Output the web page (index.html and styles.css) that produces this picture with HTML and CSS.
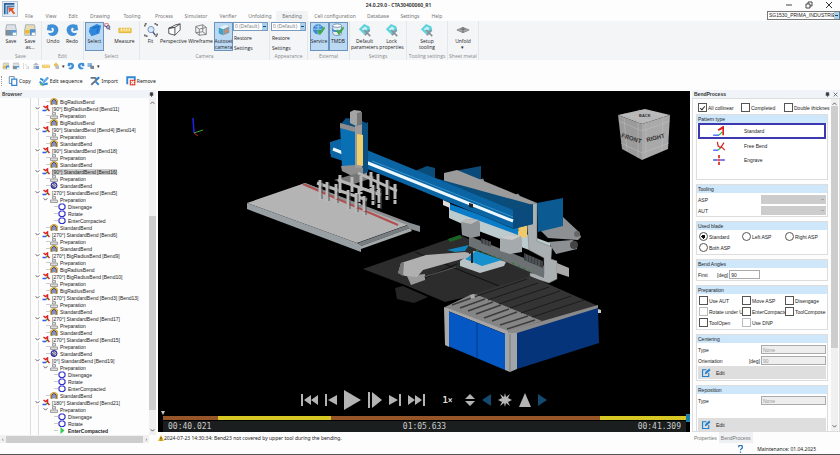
FILE: index.html
```html
<!DOCTYPE html>
<html lang="en">
<head>
<meta charset="utf-8">
<title>24.0.29.0 - CTA30400060_R1</title>
<link rel="stylesheet" href="styles.css">
</head>
<body>
<svg class="defs" aria-hidden="true">
  <symbol id="i-bend" viewBox="0 0 16 14"><path d="M1 11h7" stroke="#35f" stroke-width="3"/><path d="M8 11l4-4" stroke="#2b3" stroke-width="3"/><path d="M3 2l4 3 4-3v6l4 4" stroke="#d22" stroke-width="3" fill="none"/></symbol>
  <symbol id="i-prep" viewBox="0 0 16 14"><path d="M5 1h6v5H5zM1 8h14v5H1z" fill="#ddd" stroke="#888" stroke-width="1.5"/></symbol>
  <symbol id="i-std" viewBox="0 0 16 14"><path d="M1 4l4-3h6l4 3v9H1z" fill="#e9b52c" stroke="#a83"/><path d="M4 13V6l4-3 4 3v7" fill="#eef" stroke="#237" stroke-width="2"/><path d="M8 5v7" stroke="#237" stroke-width="2"/></symbol>
  <symbol id="i-stdb" viewBox="0 0 16 14"><circle cx="8" cy="7" r="6" fill="#668" stroke="#22a" stroke-width="2"/><path d="M4 4l8 6M9 3l3 4" stroke="#dde" stroke-width="2"/></symbol>
  <symbol id="i-op" viewBox="0 0 16 14"><path d="M5 2h6l3 3v5l-3 3H5l-3-3V5z" fill="#fff" stroke="#33c" stroke-width="2.4"/></symbol>
  <symbol id="i-go" viewBox="0 0 16 14"><path d="M5 0l8 7-8 7z" fill="#3c5"/></symbol>
  <symbol id="i-save" viewBox="0 0 16 16"><path d="M3 2h10l1 6v6H2V8z" fill="#dde1e5" stroke="#a4abb2"/><path d="M2 8h12v6H2z" fill="#7f8c99"/><path d="M8 8h6v6H8z" fill="#5b9bd8"/><path d="M10 11h4v3h-4z" fill="#fff"/></symbol>
  <symbol id="i-saveas" viewBox="0 0 16 16"><path d="M3 2h10l1 6v6H2V8z" fill="#e8dcb4" stroke="#a4abb2"/><path d="M2 8h12v4H2z" fill="#e9b945"/><path d="M8 7h6v7H8z" fill="#4e91d4"/><path d="M10 11h4v3h-4z" fill="#fff"/></symbol>
  <symbol id="i-undo" viewBox="0 0 16 16"><path d="M4 2c6-2 11 2 10 7s-6 7-10 5l-2-3c4 1 7 0 7-3S7 5 6 6l1 3-6-1 1-6z" fill="#3f8fd6"/></symbol>
  <symbol id="i-redo" viewBox="0 0 16 16"><path d="M12 2C6 0 1 4 2 9s6 7 10 5l2-3c-4 1-7 0-7-3s2-3 3-2L9 9l6-1-1-6z" fill="#3f8fd6"/></symbol>
  <symbol id="i-select" viewBox="0 0 16 16"><path d="M2 5l8-4 5 2-2 9-9 3-3-5z" fill="#2f86dd"/><path d="M5 6l7-2-2 7" stroke="#1565b8" fill="none"/></symbol>
  <symbol id="i-pick" viewBox="0 0 10 10"><path d="M1 1h5v4H1z" fill="#fff" stroke="#c44"/><circle cx="6" cy="6" r="2.5" fill="#aac" stroke="#446"/><path d="M1 4l3 1" stroke="#23a"/><path d="M7 8l2 2" stroke="#334"/></symbol>
  <symbol id="i-ruler" viewBox="0 0 16 16"><path d="M1 6h14v5H1z" fill="#f3cd55" stroke="#e0b030"/><path d="M4 6v3M7 6v3M10 6v3M13 6v3" stroke="#fff"/></symbol>
  <symbol id="i-fit" viewBox="0 0 16 16"><path d="M1 4V1h3M12 1h3v3M15 12v3h-3M4 15H1v-3" fill="none" stroke="#333" stroke-width="1.4" stroke-dasharray="2 1"/><circle cx="8" cy="7.500" r="3.500" fill="#d8ecf8" stroke="#68b"/><path d="M10 10l3 4" stroke="#557" stroke-width="1.500"/></symbol>
  <symbol id="i-persp" viewBox="0 0 16 16"><path d="M2 6l7-1v9l-7-2zM2 6l8-4 5-1-6 4zM15 1v7l-6 6" fill="#fff" stroke="#444"/></symbol>
  <symbol id="i-wire" viewBox="0 0 16 16"><path d="M2 4l8-2 4 3v8l-8 1-4-3zM2 4l4 3 8-2M6 7v7M10 2v8l4 3M10 10l-8 1" fill="none" stroke="#777"/></symbol>
  <symbol id="i-autoset" viewBox="0 0 16 16"><path d="M2 5l8-3 4 2-7 3z" fill="#e4f3f8"/><path d="M2 5l5 2v7l-5-2z" fill="#3da4c6"/><path d="M7 7l7-3v7l-7 3z" fill="#8d9aa3"/><path d="M9 9l3-1v2l-3 1z" fill="#e84"/></symbol>
  <symbol id="i-service" viewBox="0 0 16 16"><circle cx="7" cy="7" r="6" fill="#3c88cf"/><path d="M1 7h12M3 3c3 2 6 2 8 0M7 1v12" stroke="#a8d3f2" fill="none"/><path d="M6 9l3 5 6-8-1-2-5 6-2-3z" fill="#3fae3f"/></symbol>
  <symbol id="i-tmdb" viewBox="0 0 16 16"><path d="M2 3v9c0 3 10 3 10 0V3" fill="#e6edf3" stroke="#6a8cab"/><ellipse cx="7" cy="3" rx="5" ry="2" fill="#fff" stroke="#6a8cab"/><path d="M2 7c0 3 10 3 10 0" fill="none" stroke="#3d86cc" stroke-width="2"/><path d="M6 9l3 5 6-8-1-2-5 6-2-3z" fill="#3fae3f"/></symbol>
  <symbol id="i-param" viewBox="0 0 16 16"><path d="M1 7l6-6 6 3 1 5-6 5z" fill="#5fd0de"/><path d="M4 7l4-3 3 2-3 3z" fill="#c6f3f6"/><path d="M7 8l7 7M13 8l-5 6" stroke="#8a9196" stroke-width="2"/></symbol>
  <symbol id="i-unfold" viewBox="0 0 16 16"><path d="M1 8l7-3 7 3-7 3z" fill="#aaa" stroke="#888"/><path d="M5 7h6M8 5v6" stroke="#666"/></symbol>
  <symbol id="i-copy" viewBox="0 0 16 16"><path d="M2 1h8v11H2z" fill="#fff" stroke="#68a" stroke-width="1.500"/><path d="M6 5h8v10H6z" fill="#fff" stroke="#2e86d8" stroke-width="2"/></symbol>
  <symbol id="i-edit" viewBox="0 0 16 16"><path d="M8 3H1v12h11V9" fill="none" stroke="#1f7fd0" stroke-width="2"/><path d="M5 11l1-4 7-6 2 3-7 6z" fill="#1f7fd0"/></symbol>
  <symbol id="i-seq" viewBox="0 0 16 16"><path d="M2 4l5 3M1 9l5 5 8-2" stroke="#2e86d8" stroke-width="3" fill="none"/><path d="M5 10l8-9 3 2-8 9z" fill="#58a8e8"/><circle cx="4" cy="13" r="2" fill="#5b5"/></symbol>
  <symbol id="i-import" viewBox="0 0 16 16"><path d="M1 3h7l3 4M2 14l12-11" stroke="#687480" stroke-width="3" fill="none"/><path d="M9 9l5 5M10 5l5-3" stroke="#2e86d8" stroke-width="3"/></symbol>
  <symbol id="i-remove" viewBox="0 0 16 16"><path d="M2 13V2h12v5" fill="#fff" stroke="#2e86d8" stroke-width="3"/><path d="M6 6h9v9H6z" fill="#e43b26"/><path d="M8 8l5 5M13 8l-5 5" stroke="#fff" stroke-width="2"/></symbol>
  <symbol id="i-pin" viewBox="0 0 8 8"><path d="M2 1h4v4H2zM1 5h6M4 5v3" fill="#333" stroke="#333"/></symbol>
  <symbol id="i-down" viewBox="0 0 8 8"><path d="M1 2l3 3 3-3" fill="none" stroke="#555" stroke-width="1.500"/></symbol>
  <symbol id="i-up" viewBox="0 0 8 8"><path d="M1 6l3-3 3 3" fill="none" stroke="#555" stroke-width="1.500"/></symbol>
  <symbol id="i-cross" viewBox="0 0 8 8"><path d="M1 1l6 6M7 1L1 7" stroke="#333"/></symbol>
</svg>

<header class="titlebar">
  <svg class="logo" viewBox="0 0 16 16"><path d="M2 14V2h11" fill="none" stroke="#2b5e96" stroke-width="2"/><path d="M5 14V5h8" fill="none" stroke="#4b86bd" stroke-width="2"/><path d="M6 6l7 1-2 2 3 4-2 1-3-4-2 2z" fill="#e2542a"/></svg>
  <div class="head">
    <div class="title">24.0.29.0 - CTA30400060_R1</div>
    <nav class="tabs">
      <a href="#">File</a><a href="#">View</a><a href="#">Edit</a><a href="#" class="t-wide">Drawing</a><a href="#" class="t-wide">Tooling</a><a href="#" class="t-wide">Process</a><a href="#" class="t-wide">Simulator</a><a href="#" class="t-wide">Verifier</a><a href="#" class="t-wide">Unfolding</a><a href="#" class="t-wide active">Bending</a><a href="#" class="t-long">Cell configuration</a><a href="#" class="t-wide">Database</a><a href="#" class="t-wide">Settings</a><a href="#">Help</a>
    </nav>
  </div>
  <div class="winside">
    <div class="winbtns">
      <button aria-label="Minimize"><svg viewBox="0 0 8 8"><path d="M1 4h6" stroke="#444"/></svg></button>
      <button aria-label="Restore"><svg viewBox="0 0 8 8"><path d="M1 3h4v4H1zM3 3V1h4v4H5" fill="none" stroke="#444"/></svg></button>
      <button aria-label="Close"><svg><use href="#i-cross"/></svg></button>
    </div>
    <span class="drop machine"><select aria-label="Machine"><option>SG1530_PRIMA_INDUSTRIE</option></select></span>
  </div>
</header>

<section class="ribbon">
  <div class="group"><div class="items"><button class="tool"><svg><use href="#i-save"/></svg>Save</button><button class="tool"><svg><use href="#i-saveas"/></svg>Save<br>as...</button></div><h2>Save</h2></div>
  <div class="group"><div class="items"><button class="tool"><svg><use href="#i-undo"/></svg>Undo</button><button class="tool"><svg><use href="#i-redo"/></svg>Redo</button></div><h2>Edit</h2></div>
  <div class="group"><div class="items"><button class="tool on"><svg><use href="#i-select"/></svg>Select</button><button class="mini" aria-label="Pick"><svg><use href="#i-pick"/></svg></button><button class="tool mid"><svg><use href="#i-ruler"/></svg>Measure</button></div><h2>Select</h2></div>
  <div class="group"><div class="items"><button class="tool"><svg><use href="#i-fit"/></svg>Fit</button><button class="tool mid"><svg><use href="#i-persp"/></svg>Perspective</button><button class="tool mid"><svg><use href="#i-wire"/></svg>Wireframe</button><button class="tool on"><svg><use href="#i-autoset"/></svg>Autoset<br>camera</button>
    <div class="stack"><span class="drop"><select aria-label="Camera preset"><option>0 (Default)</option></select></span><button>Restore</button><button>Settings</button></div></div><h2>Camera</h2></div>
  <div class="group"><div class="items"><div class="stack"><span class="drop"><select aria-label="Appearance preset"><option>0 (Default)</option></select></span><button>Restore</button><button>Settings</button></div></div><h2>Appearance</h2></div>
  <div class="group"><div class="items"><button class="tool on"><svg><use href="#i-service"/></svg>Service</button><button class="tool on"><svg><use href="#i-tmdb"/></svg>TMDB</button></div><h2>External</h2></div>
  <div class="group"><div class="items"><button class="tool mid"><svg><use href="#i-param"/></svg>Default<br>parameters</button><button class="tool mid"><svg><use href="#i-param"/></svg>Lock<br>properties</button></div><h2>Settings</h2></div>
  <div class="group"><div class="items"><button class="tool mid"><svg><use href="#i-param"/></svg>Setup<br>tooling</button></div><h2>Tooling settings</h2></div>
  <div class="group"><div class="items"><button class="tool mid"><svg><use href="#i-unfold"/></svg>Unfold<br>▾</button></div><h2>Sheet metal</h2></div>
</section>

<div class="quick">
  <svg><use href="#i-saveas"/></svg><svg><use href="#i-save"/></svg><svg viewBox="0 0 16 16"><path d="M3 2v12M6 4l7 9M13 8v5H8" stroke="#bbb" fill="none"/></svg><svg viewBox="0 0 16 16"><path d="M8 1l6 5H2zM3 7h8v7H3z" fill="#b4bcc5"/><path d="M8 8h6v6H8z" fill="#6e9fd0"/></svg><svg><use href="#i-ruler"/></svg><svg viewBox="0 0 16 16"><path d="M8 1l5 5-5 5-5-5z" fill="#e8c24e"/><path d="M7 7h7v7H7z" fill="#b9bfc6"/></svg><span>▾</span><svg><use href="#i-undo"/></svg><svg><use href="#i-redo"/></svg><svg viewBox="0 0 16 16"><path d="M1 2h9v8H1z" fill="#8bb7de"/><path d="M6 6l8 2v6H7z" fill="#7b8894"/></svg><span>▾</span>
</div>
<div class="actions">
  <i class="grip"></i>
  <button><svg><use href="#i-copy"/></svg>Copy</button>
  <button><svg><use href="#i-seq"/></svg>Edit sequence</button>
  <button><svg><use href="#i-import"/></svg>Import</button>
  <button><svg><use href="#i-remove"/></svg>Remove</button>
</div>

<main class="work">
  <aside class="browser">
    <div class="panel-head"><b>Browser</b><svg><use href="#i-pin"/></svg></div>
    <div class="tree-wrap">
      <ul class="tree">
        <li class="l1"><svg><use href="#i-std"/></svg>BigRadiusBend</li>
        <li class="l0"><svg class="chev"><use href="#i-down"/></svg><svg><use href="#i-bend"/></svg>[90°] BigRadiusBend [Bend11]</li>
        <li class="l1"><svg><use href="#i-prep"/></svg>Preparation</li>
        <li class="l1"><svg><use href="#i-std"/></svg>BigRadiusBend</li>
        <li class="l0"><svg class="chev"><use href="#i-down"/></svg><svg><use href="#i-bend"/></svg>[90°] StandardBend [Bend4] [Bend14]</li>
        <li class="l1"><svg><use href="#i-prep"/></svg>Preparation</li>
        <li class="l1"><svg><use href="#i-std"/></svg>StandardBend</li>
        <li class="l0"><svg class="chev"><use href="#i-down"/></svg><svg><use href="#i-bend"/></svg>[90°] StandardBend [Bend18]</li>
        <li class="l1"><svg><use href="#i-prep"/></svg>Preparation</li>
        <li class="l1"><svg><use href="#i-std"/></svg>StandardBend</li>
        <li class="l0"><svg class="chev"><use href="#i-down"/></svg><svg><use href="#i-bend"/></svg><span class="sel">[90°] StandardBend [Bend16]</span></li>
        <li class="l1"><svg><use href="#i-prep"/></svg>Preparation</li>
        <li class="l1"><svg><use href="#i-stdb"/></svg>StandardBend</li>
        <li class="l0"><svg class="chev"><use href="#i-down"/></svg><svg><use href="#i-bend"/></svg>[270°] StandardBend [Bend5]</li>
        <li class="l1 open"><svg class="chev"><use href="#i-down"/></svg><svg><use href="#i-prep"/></svg>Preparation</li>
        <li class="l2"><svg><use href="#i-op"/></svg>Disengage</li>
        <li class="l2"><svg><use href="#i-op"/></svg>Rotate</li>
        <li class="l2"><svg><use href="#i-op"/></svg>EnterCompacted</li>
        <li class="l1"><svg><use href="#i-std"/></svg>StandardBend</li>
        <li class="l0"><svg class="chev"><use href="#i-down"/></svg><svg><use href="#i-bend"/></svg>[270°] StandardBend [Bend6]</li>
        <li class="l1"><svg><use href="#i-prep"/></svg>Preparation</li>
        <li class="l1"><svg><use href="#i-std"/></svg>StandardBend</li>
        <li class="l0"><svg class="chev"><use href="#i-down"/></svg><svg><use href="#i-bend"/></svg>[270°] BigRadiusBend [Bend9]</li>
        <li class="l1"><svg><use href="#i-prep"/></svg>Preparation</li>
        <li class="l1"><svg><use href="#i-std"/></svg>BigRadiusBend</li>
        <li class="l0"><svg class="chev"><use href="#i-down"/></svg><svg><use href="#i-bend"/></svg>[270°] BigRadiusBend [Bend10]</li>
        <li class="l1"><svg><use href="#i-prep"/></svg>Preparation</li>
        <li class="l1"><svg><use href="#i-std"/></svg>BigRadiusBend</li>
        <li class="l0"><svg class="chev"><use href="#i-down"/></svg><svg><use href="#i-bend"/></svg>[270°] StandardBend [Bend3] [Bend13]</li>
        <li class="l1"><svg><use href="#i-prep"/></svg>Preparation</li>
        <li class="l1"><svg><use href="#i-std"/></svg>StandardBend</li>
        <li class="l0"><svg class="chev"><use href="#i-down"/></svg><svg><use href="#i-bend"/></svg>[270°] StandardBend [Bend17]</li>
        <li class="l1"><svg><use href="#i-prep"/></svg>Preparation</li>
        <li class="l1"><svg><use href="#i-std"/></svg>StandardBend</li>
        <li class="l0"><svg class="chev"><use href="#i-down"/></svg><svg><use href="#i-bend"/></svg>[270°] StandardBend [Bend15]</li>
        <li class="l1"><svg><use href="#i-prep"/></svg>Preparation</li>
        <li class="l1"><svg><use href="#i-stdb"/></svg>StandardBend</li>
        <li class="l0"><svg class="chev"><use href="#i-down"/></svg><svg><use href="#i-bend"/></svg>[0°] StandardBend [Bend19]</li>
        <li class="l1 open"><svg class="chev"><use href="#i-down"/></svg><svg><use href="#i-prep"/></svg>Preparation</li>
        <li class="l2"><svg><use href="#i-op"/></svg>Disengage</li>
        <li class="l2"><svg><use href="#i-op"/></svg>Rotate</li>
        <li class="l2"><svg><use href="#i-op"/></svg>EnterCompacted</li>
        <li class="l1"><svg><use href="#i-std"/></svg>StandardBend</li>
        <li class="l0"><svg class="chev"><use href="#i-down"/></svg><svg><use href="#i-bend"/></svg>[180°] StandardBend [Bend21]</li>
        <li class="l1 open"><svg class="chev"><use href="#i-down"/></svg><svg><use href="#i-prep"/></svg>Preparation</li>
        <li class="l2"><svg><use href="#i-op"/></svg>Disengage</li>
        <li class="l2"><svg><use href="#i-op"/></svg>Rotate</li>
        <li class="l2"><svg><use href="#i-go"/></svg><b>EnterCompacted</b></li>
      </ul>
      <div class="vbar"><svg><use href="#i-up"/></svg><i class="space"></i><i class="thumb"></i><i class="rest"></i><svg><use href="#i-down"/></svg></div>
    </div>
    <div class="hbar"><span>‹</span><i></i><span>›</span></div>
  </aside>

  <section class="center">
    <div class="viewport">
      <svg class="scene" viewBox="158 91 532 341" role="img" aria-label="Machine view">
        <!-- axes -->
        <path d="M193 118l1 15" stroke="#22e" stroke-width="1.500"/><path d="M194 133l9-3" stroke="#3a3"/><path d="M194 133l4 3" stroke="#c22"/>
        <!-- loading table -->
        <path d="M247 203l58-20 105 41-53 19z" fill="#b4b4b4"/>
        <path d="M247 203l110 40 4 2v7l-114-43z" fill="#99a0a3"/>
        <path d="M358 243l50-18 2 3-49 18z" fill="#777d80"/><path d="M361 246l49-18 2 3-51 18z" fill="#a3a9ab"/>
        <path d="M305 183l105 40 10 3v6l-10-3-3-4-102-39z" fill="#8c9092"/>
        <path d="M303 184l95 41" stroke="#b05050" stroke-width="2"/>
        <!-- floor plates -->
        <path d="M363 269l97-34 88 40-30 10-73 17-40-17z" fill="#2c2c2c"/>
        <path d="M415 252l84 34M411 284l46-20" stroke="#111"/>
        <path d="M448 239l12-4 2 3-12 4z" fill="#1c6424"/>
        <!-- rear frame -->
        <path d="M455 171l26-5v14l-4 3z" fill="#0b4a78"/>
        <path d="M563 217l16 15 2 5-3 3-30-2-8-8z" fill="#8c9092"/><circle cx="577" cy="234" r="3" fill="#666"/>
        <path d="M548 242l24-2 5 2v7l-21 5z" fill="#8c9092"/><circle cx="574" cy="245" r="4" fill="#444"/>
        <path d="M477 181l6-2 1 4M511 197l7-3 4 6" fill="#777" stroke="#888"/>
        <path d="M444 173l13-3 80 33v9l-20-6-73-25z" fill="#9b9b9b"/><path d="M506 201l9 3v4l-9-3z" fill="#444"/>
        <path d="M449 205l101 38v15l-74-28-27-12z" fill="#bccbce"/>
        <path d="M526 206l11-3v38l15 6-1 12 6 2v18l-8 4-19-6v-4l14 2v-17l-15-8z" fill="#aab0b2" stroke="#777" stroke-width=".5"/>
        <path d="M557 263l12 5v9l-12-4z" fill="#a9a9a9"/>
        <path d="M537 203l26-5v28l-25 6z" fill="#0b5a91"/>
        <path d="M443 200l7 3v5l-7-3z" fill="#ddd"/>
        <path d="M450 204l68 24v7l-68-25z" fill="#0b7cc8"/>
        <path d="M518 226l9-3v14l-8 1z" fill="#f0ca6a"/>
        <!-- press bed -->
        <path d="M469 236l75 30v12l-75-32z" fill="#6c7173"/>
        <path d="M481 238l10 4v5l-10-4zM524 253l19 8v7l-19-8z" fill="#3b3f42"/>
        <path d="M484 239v6M487 240v6M490 241v6M527 255v6M530 256v6M533 257v6M536 259v6M539 260v6" stroke="#777" stroke-width=".7"/>
        <path d="M461 222l6-3 12 1 1 4v12l-9 2-9-3z" fill="#8e9396"/><path d="M461 222l6-3 12 1-8 4z" fill="#bbb"/>
        <path d="M500 238l8-3 13 1 1 4v12l-12 2-10-3z" fill="#a5aaad"/><path d="M500 238l8-3 13 1-9 4z" fill="#ccc"/>
        <!-- tray -->
        <path d="M447 250l22-5-4 6-10 1z" fill="#0f84c0"/>
        <path d="M460 261l14-10 32 11-2 4-24 7-20-7z" fill="#b9c2c5"/>
        <path d="M465 259l11-8 26 9-20 6z" fill="#1790ce"/><path d="M472 252v11" stroke="#222" stroke-width="2"/>
        <path d="M476 250l26 9M512 263l18 8" stroke="#2a7a35" stroke-dasharray="3 3"/>
        <!-- unload arm -->
        <path d="M395 288l8-2 25 11-14 6-17-4z" fill="#252525"/>
        <path d="M407 276l18-2v6l-14 5z" fill="#9a9a9a"/><path d="M398 273l3-10 25-8 39-3 4 1v4l-46 13-6 7-12-1z" fill="#b0b0b0"/><path d="M398 273l3-10 3 0-1 13z" fill="#777"/><path d="M424 277l32-10" stroke="#555"/>
        <!-- gantry -->
        <path d="M372 153l43 18 12-5 8 2v10l98 27v19l-20 5-143-60-40-15V142z" fill="#0a4c7a"/>
        <path d="M330 142l10-3 173 71v18l-143-58-39-13z" fill="#0b65a4"/>
        <path d="M513 210l20-6v20l-20 5z" fill="#0a4a7c"/>
        <path d="M333 149l180 72" stroke="#eef8ff" stroke-width="3"/><path d="M372 161l141 56" stroke="#3591cc"/>
        <path d="M469 203l4 1v4l-4-1z" fill="#222"/>
        <path d="M340 125l15 4v38l-13 1z" fill="#0a70b4"/><path d="M340 125l6-7 14 2 8 4v48h-8l-5-40z" fill="#0a4f80"/>
        <path d="M340 123l15 4v5l-15-4zM341 166l14-1 12 4v6l-13 2-12-6z" fill="#8e8e8e"/>
        <path d="M355 126l7-2v44h-7z" fill="#9a9a9a"/><path d="M357 134l6 1v31l-6-1z" fill="#efcf6c"/>
        <path d="M363 125l5-3v50l-5 2z" fill="#0a4f80"/>
        <path d="M350 112l4-2 7 1 1 12-6 3-6-3z" fill="#a4a4a4"/><path d="M357 113l5-1v11l-5 3z" fill="#777"/>
        <!-- gripper bars -->
        <path d="M334 180l24-7 17 4-24 8z" fill="#777"/>
        <path d="M317 183l50 17M338 180l43 15M358 173l39 18" stroke="#b8b8b8" stroke-width="3"/>
        <g stroke="#b9b9b9" stroke-width="3" stroke-dasharray="15 1 4"><path d="M320 180v20M327 182v20M336 184v19M348 190v20M356 193v20M364 196v20M340 175v18M352 177v16M361 176v18M373 185v20M379 188v22M371 172v18M378 174v18M387 180v21M395 184v21M359 187v18"/></g>
        <g stroke="#555"><path d="M322 181v18M329 183v18M338 185v18M350 191v18M358 194v18M366 197v18M375 186v18M381 189v20M389 181v19"/></g>
        <!-- stacking table -->
        <path d="M445 307l25-12 60-19 68 30-90 26z" fill="#343434"/>
        <path d="M445 307l25-12 5-1 67 27-34 11z" fill="#858585"/>
        <path d="M452 305l25-9M460 308l25-9M468 311l25-9M476 314l25-9M484 318l25-9M492 321l25-9M500 325l28-9M507 329l28-9" stroke="#3c3c3c" stroke-width="1.500"/>
        <path d="M477 296l50-17M488 300l50-17M499 304l50-17M510 308l50-17M521 313l50-17M532 317l52-17" stroke="#1c1c1c"/>
        <path d="M470 295l4-1 1 4-4 1z" fill="#aaa"/>
        <path d="M445 307l3 1 60 23v4l-60-24z" fill="#a6a6a6"/>
        <path d="M448 311l57 23v36l-57-24z" fill="#0558c4"/><path d="M477 323v35" stroke="#03398a"/>
        <path d="M444 307l5 2v38l-4-2z" fill="#aaa"/>
        <path d="M505 332h12v37l-7 3-5-2z" fill="#a2a5a7"/><path d="M510 334v37" stroke="#777"/>
        <path d="M517 332l81-25 1 36-82 26z" fill="#05347a"/><path d="M508 331l90-26v3l-81 25h-9z" fill="#8a8a8a"/><path d="M598 309l3 1v3h-3z" fill="#ccc"/>
        <!-- view cube -->
        <path d="M618 115l27-6 25 6-28 9z" fill="#b8b8b8"/><path d="M618 115l24 9v36l-20-11z" fill="#9b9b9b"/><path d="M642 124l28-9-2 34-26 11z" fill="#a9a9a9"/>
        <path d="M619 121l23 10 28-10M621 143l21 10 27-10M624 118l3 33M663 117l-1 34M646 123v35M638 122v36M624 114l27 7M638 110l27 6" fill="none" stroke="#c8c8c8" stroke-width=".4"/>
        <text class="cube" x="621" y="137" transform="rotate(18 621 137)">FRONT</text><text class="cube" x="647" y="142" transform="rotate(-14 647 142)">RIGHT</text><text class="cube top" x="639" y="117">BACK</text>
      </svg>
      <div class="playback">
        <div class="controls">
          <button class="w17" aria-label="First"><svg viewBox="0 0 17 14"><path d="M0 1h2v12H0zM10 2v10L3 7zM17 2v10l-7-5z"/></svg></button>
          <button class="w12" aria-label="Previous"><svg viewBox="0 0 12 14"><path d="M0 1h2v12H0zM12 2v10L3 7z"/></svg></button>
          <button class="w17" aria-label="Play"><svg viewBox="0 0 17 20"><path d="M0 0l17 10L0 20z"/></svg></button>
          <button class="w14" aria-label="Step"><svg viewBox="0 0 14 16"><path d="M0 0h2v16H0zM4 0l10 8-10 8z"/></svg></button>
          <button class="w12" aria-label="Next"><svg viewBox="0 0 12 14"><path d="M10 1h2v12h-2zM0 2v10l9-5z"/></svg></button>
          <button class="w17" aria-label="Last"><svg viewBox="0 0 17 14"><path d="M15 1h2v12h-2zM0 2v10l7-5zM7 2v10l7-5z"/></svg></button>
          <span class="speed">1<small>×</small></span>
          <button class="w10" aria-label="Speed"><svg viewBox="0 0 10 12"><path d="M0 5l5-5 5 5zM0 7h10l-5 5z"/></svg></button>
          <button class="w9 blue" aria-label="Previous collision"><svg viewBox="0 0 9 12"><path d="M9 0v12L0 6z"/></svg></button>
          <button class="w14" aria-label="Collision"><svg viewBox="0 0 14 14"><path d="M7 0l1 4 4-3-2 4 4 2-4 2 2 4-4-3-1 4-1-4-4 3 2-4-4-2 4-2-2-4 4 3z"/></svg></button>
          <button class="w12" aria-label="Warning"><svg viewBox="0 0 12 14"><path d="M6 0l6 14H0z"/></svg></button>
          <button class="w9 blue" aria-label="Next collision"><svg viewBox="0 0 9 12"><path d="M0 0v12l9-6z"/></svg></button>
        </div>
        <svg class="marker" viewBox="0 0 4 4"><path d="M0 0h4L2 4z" fill="#ccc"/></svg>
        <div class="track"><i class="brown"></i><i class="yellow"></i><i class="brown long"></i><i class="yellow end"></i><i class="knob"></i></div>
        <div class="times"><span>00:40.021</span><span>01:05.633</span><span>00:41.309</span></div>
      </div>
    </div>
    <div class="message"><svg viewBox="0 0 12 12"><path d="M6 0l6 12H0z" fill="#e2b51c"/><path d="M6 4v4M6 9v2" stroke="#222" stroke-width="1.500"/></svg>2024-07-23 14:30:34: Bend23 not covered by upper tool during the bending.</div>
  </section>

  <aside class="props">
    <div class="panel-head"><b>BendProcess</b><svg><use href="#i-pin"/></svg><svg><use href="#i-cross"/></svg></div>
    <div class="prop-wrap">
      <form class="form">
        <div class="cols top-row"><label><input type="checkbox" checked>All collinear</label><label><input type="checkbox">Completed</label><label><input type="checkbox">Double thicknes</label></div>
        <fieldset class="pattern"><h3>Pattern type</h3>
          <button type="button" class="pat chosen"><svg viewBox="0 0 16 12"><path d="M1 11h7" stroke="#35f" stroke-width="1.500"/><path d="M8 11l4-4" stroke="#2b3" stroke-width="1.500"/><path d="M13 7V1L7 5l6-3v9" stroke="#d22" stroke-width="2" fill="none"/></svg>Standard</button>
          <button type="button" class="pat"><svg viewBox="0 0 16 12"><path d="M1 11h6" stroke="#35f" stroke-width="1.500"/><path d="M7 11l4-4" stroke="#2b3" stroke-width="1.500"/><path d="M6 1l1 5 3 2 4-6M11 7l4 4" stroke="#d22" stroke-width="1.500" fill="none"/></svg>Free Bend</button>
          <button type="button" class="pat"><svg viewBox="0 0 16 12"><path d="M1 6h5M10 6h5" stroke="#35f" stroke-width="2"/><path d="M8 0v4M8 8v4M6 6h4" stroke="#d22" stroke-width="2"/></svg>Engrave</button>
        </fieldset>
        <fieldset><h3>Tooling</h3>
          <div class="row"><label for="asp">ASP</label><span class="drop grey"><select id="asp" disabled></select></span></div>
          <div class="row"><label for="aut">AUT</label><span class="drop grey"><select id="aut" disabled></select></span></div>
        </fieldset>
        <fieldset><h3>Used blade</h3>
          <div class="cols"><label><input type="radio" name="blade" checked>Standard</label><label><input type="radio" name="blade">Left ASP</label><label><input type="radio" name="blade">Right ASP</label><label><input type="radio" name="blade">Both ASP</label></div>
        </fieldset>
        <fieldset><h3>Bend Angles</h3>
          <div class="row first"><label for="first">First</label><span>[deg]</span><input id="first" value="90"></div>
        </fieldset>
        <fieldset><h3>Preparation</h3>
          <div class="cols"><label><input type="checkbox">Use AUT</label><label><input type="checkbox">Move ASP</label><label><input type="checkbox">Disengage</label><label><input type="checkbox" class="dim">Rotate under U</label><label><input type="checkbox">EnterCompacte</label><label><input type="checkbox">ToolCompose</label><label><input type="checkbox">ToolOpen</label><label><input type="checkbox" class="dim">Use DNP</label></div>
        </fieldset>
        <fieldset><h3>Centering</h3>
          <div class="row"><label for="ctype">Type</label><input id="ctype" value="None" disabled></div>
          <div class="row"><label for="orient">Orientation</label><span>[deg]</span><input id="orient" value="90" disabled></div>
          <button type="button" class="edit"><svg><use href="#i-edit"/></svg>Edit</button>
        </fieldset>
        <fieldset class="repos"><h3>Reposition</h3>
          <div class="row"><label for="rtype">Type</label><input id="rtype" value="None" disabled></div>
          <button type="button" class="edit"><svg><use href="#i-edit"/></svg>Edit</button>
        </fieldset>
      </form>
      <div class="vbar right"><svg><use href="#i-up"/></svg><i class="thumb"></i><i class="rest"></i><svg><use href="#i-down"/></svg></div>
    </div>
    <div class="dock-tabs"><button>Properties</button><button class="cur">BendProcess</button></div>
  </aside>
</main>

<footer class="status"><svg viewBox="0 0 8 12"><path d="M1 3c0-4 6-4 6 0 0 3-3 2-3 5" fill="none" stroke="#2b6fb5" stroke-width="2"/><path d="M3 10h2v2H3z" fill="#2b6fb5"/></svg><span>Maintenance: 01.04.2025</span></footer>
</body>
</html>
```
FILE: styles.css
```css
* { box-sizing: border-box; }
body {
  margin: 0;
  height: 100vh;
  display: flex;
  flex-direction: column;
  overflow: hidden;
  background: #fdfdfd;
  color: #222;
  font: 5px/6px "Noto Sans", "Open Sans", sans-serif;
}
button, input, select { font: inherit; color: inherit; margin: 0; padding: 0; border: 0; background: none; border-radius: 0; }
svg { flex: none; display: block; }
.defs { position: absolute; width: 0; height: 0; }
h2, h3 { margin: 0; font: inherit; }

/* title and tabs */
.titlebar { display: flex; height: 21px; flex: none; }
.logo { width: 16px; height: 16px; margin: 1px 0 0 2px; background: #e6eef6; border: 1px solid #b5c6d6; }
.head { flex: 1; display: flex; flex-direction: column; justify-content: space-between; }
.title { padding: 2px 0 0 12px; text-align: center; font-weight: 600; }
.tabs { display: flex; }
.tabs a { width: 22px; padding: 2px 0; text-align: center; color: #777; text-decoration: none; white-space: nowrap; }
.tabs .t-wide { width: 32px; }
.tabs .t-long { width: 54px; }
.tabs .active { background: #f1f3f5; }
.winside { width: 73px; display: flex; flex-direction: column; justify-content: space-between; padding: 1px 0; }
.winbtns { display: flex; justify-content: flex-end; gap: 12px; padding: 0 7px 0 0; }
.winbtns svg { width: 8px; height: 8px; }
.drop { position: relative; display: block; background: #fff; border: 1px solid #777; }
.drop select { appearance: none; display: block; width: 100%; height: 7px; padding: 0 1px; line-height: 7px; }
.drop::after { content: ""; position: absolute; right: 0; top: 0; bottom: 0; width: 5px; background: linear-gradient(#246, #246) center / 3px 1px no-repeat #a9d0ec; }
.machine { font-family: "Liberation Sans", sans-serif; }
.drop.grey { background: #ccc; border-color: #ccc; }
.drop.grey::after { background: linear-gradient(#aaa, #aaa) center / 3px 1px no-repeat; }

/* ribbon */
.ribbon { flex: none; display: grid; grid-template-columns: 42px 42px 56px 130px 38px 42px 57px 41px 31px; height: 39px; background: #f3f5f7; font-family: "Open Sans", "Noto Sans", sans-serif; }
.group { display: flex; flex-direction: column; justify-content: space-between; padding: 1px 0; border-right: 1px solid #e4e7ea; }
.group h2 { color: #888; white-space: nowrap; display: flex; justify-content: center; }
.items { display: flex; justify-content: center; }
.tool { width: 19px; height: 29px; flex: none; display: flex; flex-direction: column; align-items: center; padding-top: 1px; white-space: nowrap; line-height: 6px; }
.tool svg { width: 14px; height: 14px; margin-bottom: 1px; }
.tool.mid { width: 27px; }
.tool.on { background: #bcd9f3; border: 1px solid #6b93bd; padding-top: 0; }
.mini { align-self: flex-start; padding-top: 1px; }
.mini svg { width: 7px; height: 7px; }
.stack { display: flex; flex-direction: column; width: 35px; gap: 3px; }
.stack button { text-align: left; padding: 0 1px; height: 7px; }
.stack .drop { color: #777; border-color: #7a9cc0; }

/* small toolbars */
.quick { flex: none; display: flex; align-items: center; gap: 2px; height: 12px; padding-left: 2px; }
.quick svg { width: 8px; height: 8px; }
.quick span { width: 3px; }
.actions { flex: none; display: flex; align-items: center; gap: 8px; height: 18px; padding-left: 1px; }
.grip { width: 1px; height: 10px; border-left: 1px dotted #999; margin-right: -2px; }
.actions button { display: flex; align-items: center; gap: 1px; white-space: nowrap; }
.actions svg { width: 10px; height: 10px; }

/* work area */
.work { flex: 1; min-height: 0; display: flex; gap: 2px; }
.browser { width: 156px; flex: none; display: flex; flex-direction: column; }
.panel-head { flex: none; display: flex; align-items: center; gap: 3px; height: 8px; padding: 0 2px; background: #f0f3f7; color: #333; }
.panel-head b { flex: 1; font-weight: 600; }
.panel-head svg { width: 5px; height: 5px; }
.tree-wrap { flex: 1; min-height: 0; display: flex; }
.tree { flex: 1; margin: 0; padding: 0; list-style: none; overflow: hidden; font-family: "Liberation Sans", sans-serif; background: linear-gradient(#ddd, #ddd) 30px 0 / 1px 100% no-repeat, linear-gradient(#ddd, #ddd) 38px 0 / 1px 100% no-repeat; }
.tree li { display: flex; align-items: center; gap: 2px; height: 7px; white-space: nowrap; }
.tree svg { width: 8px; height: 7px; }
.tree .chev { width: 5px; height: 5px; background: #fdfdfd; }
.tree .l0 { padding-left: 35px; }
.tree .l1 { padding-left: 50px; background: linear-gradient(#ccc, #ccc) 46px 50% / 4px 1px no-repeat; }
.tree .l1.open { padding-left: 43px; background: none; }
.tree .l2 { padding-left: 58px; background: linear-gradient(#ccc, #ccc) 54px 50% / 4px 1px no-repeat; }
.tree .sel { background: #ccc; }
.vbar { width: 7px; flex: none; display: flex; flex-direction: column; align-items: center; background: #f0f0f0; padding: 2px 0; }
.vbar svg { width: 5px; height: 5px; }
.vbar .thumb { width: 100%; background: #cdcdcd; flex: 195; }
.vbar .space { flex: 112; }
.vbar .rest { flex: 18; }
.vbar.right .thumb { flex: 243; }
.vbar.right .rest { flex: 76; }
.hbar { flex: none; display: flex; align-items: center; height: 8px; margin-right: 7px; padding: 0 2px; gap: 2px; background: #f0f0f0; }
.hbar i { flex: 1; height: 7px; background: #cdcdcd; }

.center { flex: 1; min-width: 0; display: flex; flex-direction: column; }
.viewport { flex: 1; min-height: 0; position: relative; display: flex; flex-direction: column; justify-content: flex-end; margin-top: 1px; background: #000; }
.scene { position: absolute; inset: 0; width: 100%; height: 100%; }
.cube { font: bold 6px "Liberation Sans", sans-serif; fill: #333; }
.cube.top { font-size: 4px; }
.playback { position: relative; }
.controls { display: flex; align-items: center; justify-content: center; gap: 7px; height: 22px; }
.controls svg { width: 100%; fill: #b4b4b4; }
.w9 { width: 9px; } .w10 { width: 10px; } .w12 { width: 12px; } .w14 { width: 14px; } .w17 { width: 17px; }
.controls .blue svg { fill: #124a70; }
.speed { color: #ddd; font: bold 9px/12px "DejaVu Sans Mono", monospace; margin: 0 5px 0 10px; }
.speed small { font-size: 8px; }
.marker { width: 4px; height: 4px; margin-left: 3px; }
.track { display: flex; align-items: center; height: 6px; padding-left: 5px; }
.track i { height: 4px; }
.brown { flex: 55; background: #97562a; }
.brown.long { flex: 269; }
.yellow { flex: 113; background: #d6c724; }
.yellow.end { flex: 86; }
.track .knob { width: 4px; height: 8px; background: #1b7fae; }
.times { display: flex; justify-content: space-between; margin: 0 4px 0 5px; padding: 0 5px; background: #1b1e1e; color: #ccc; font: 8px/11px "DejaVu Sans Mono", monospace; }
.message { flex: none; display: flex; align-items: center; height: 11px; white-space: nowrap; }
.message svg { width: 6px; height: 6px; }

/* properties */
.props { width: 148px; flex: none; display: flex; flex-direction: column; font-family: "Liberation Sans", sans-serif; }
.prop-wrap { flex: 1; min-height: 0; display: flex; gap: 1px; padding-right: 1px; border: 1px solid #ddd; }
.form { flex: 1; min-width: 0; overflow: hidden; display: flex; flex-direction: column; gap: 4px; padding: 2px 2px 0 3px; }
.form fieldset { flex: none; min-width: 0; margin: 0; padding: 0 1px 1px; border: 1px solid #ddd; background: #fff; }
.form h3 { height: 8px; margin: 0 -1px; padding-left: 1px; line-height: 8px; background: #cfe7fb; }
.cols { flex: none; display: grid; grid-template-columns: repeat(3, 43px); row-gap: 2px; padding: 2px 0 1px 1px; }
.cols label { display: flex; align-items: center; gap: 1px; height: 9px; white-space: nowrap; }
.cols input { appearance: none; flex: none; display: grid; place-items: center; width: 9px; height: 9px; border: 1px solid #555; background: #fff; }
.cols input.dim { border-color: #bbb; }
.cols input[type="radio"] { border-radius: 50%; }
.cols input[type="radio"]:checked { background: radial-gradient(#111 0 2px, #fff 2px); }
.cols input[type="checkbox"]:checked::after { content: ""; width: 2px; height: 4px; border: solid #333; border-width: 0 1px 1px 0; transform: rotate(40deg); }
.top-row { padding: 2px 0 0 2px; margin-bottom: -2px; }
.pattern { min-height: 66px; }
.pat { display: flex; align-items: center; width: 100%; height: 14px; gap: 18px; padding-left: 14px; }
.pat svg { width: 14px; height: 10px; }
.pat.chosen { height: 16px; border: 2px solid #3c38ae; padding-left: 12px; }
.row { display: flex; align-items: center; height: 9px; margin-top: 2px; gap: 1px; }
.row label { flex: 1; }
.row input, .row .drop { width: 65px; height: 9px; }
.row input { border: 1px solid #aaa; padding: 0 1px; }
.row input:disabled { background: #eee; color: #999; }
.row.first label { flex: none; width: 18px; }
.row.first input { width: 31px; }
.edit { display: flex; align-items: center; gap: 5px; width: 100%; height: 13px; margin-top: 1px; padding-left: 4px; background: #dedede; }
.edit svg { width: 9px; height: 9px; }
.repos .edit { margin-top: 13px; }
.dock-tabs { flex: none; display: flex; height: 11px; color: #777; }
.dock-tabs button { padding: 0 2px; }
.dock-tabs .cur { background: #eef0f2; }

.status { flex: none; display: flex; align-items: center; justify-content: flex-end; gap: 14px; height: 12px; padding-right: 24px; border-bottom: 1px solid #555; }
.status svg { width: 5px; height: 8px; }
```
